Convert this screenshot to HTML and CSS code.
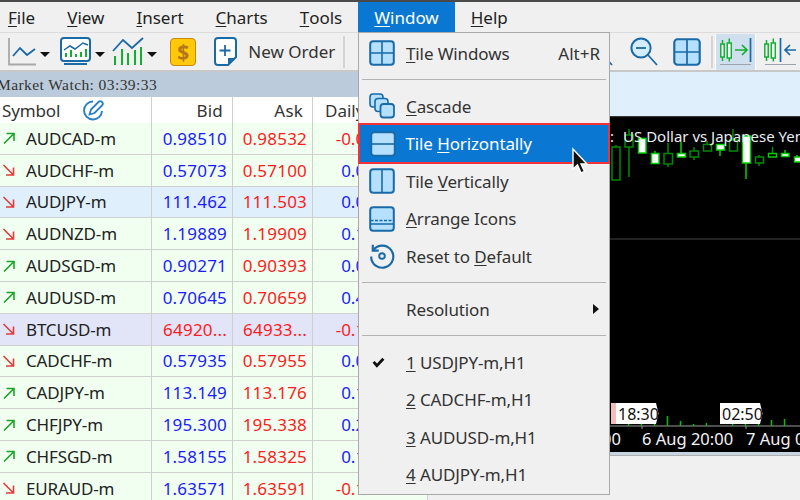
FILE: index.html
```html
<!DOCTYPE html>
<html lang="en">
<head>
<meta charset="utf-8">
<title>MetaTrader Window menu</title>
<link rel="stylesheet" href="styles.css">
</head>
<body>
<svg class="defs" width="0" height="0" aria-hidden="true">
  <symbol id="up" viewBox="0 0 14 14"><path d="M2 12.500 12 2.500M4.500 2.500H12V10" fill="none" stroke="#1aa52a" stroke-width="1.600"/></symbol>
  <symbol id="down" viewBox="0 0 14 14"><path d="M1.500 2 11.500 12M11.500 4.500V12H4" fill="none" stroke="#e23c3c" stroke-width="1.600"/></symbol>
  <symbol id="tile4" viewBox="0 0 26 26"><rect x="1.200" y="1.200" width="23.600" height="23.600" rx="3" fill="#b5e0ff" stroke="#1a6aa8" stroke-width="2"/><path d="M13 1.500V24.500M1.500 13H24.500" stroke="#1a6aa8" stroke-width="1.600"/></symbol>
  <symbol id="tileh" viewBox="0 0 26 26"><rect x="1.200" y="1.200" width="23.600" height="23.600" rx="3" fill="#b5e0ff" stroke="#1a6aa8" stroke-width="2"/><path d="M1.500 13H24.500" stroke="#1a6aa8" stroke-width="1.600"/></symbol>
  <symbol id="tilev" viewBox="0 0 26 26"><rect x="1.200" y="1.200" width="23.600" height="23.600" rx="3" fill="#b5e0ff" stroke="#1a6aa8" stroke-width="2"/><path d="M13 1.500V24.500" stroke="#1a6aa8" stroke-width="1.600"/></symbol>
  <symbol id="arrange" viewBox="0 0 26 26"><rect x="1.200" y="1.200" width="23.600" height="23.600" rx="3" fill="#b5e0ff" stroke="#1a6aa8" stroke-width="2"/><path d="M1.500 14.500H24.500" stroke="#1a6aa8" stroke-width="1.500" stroke-dasharray="3 1.500"/><path d="M1.500 18H24.500" stroke="#1a6aa8" stroke-width="1.500"/></symbol>
  <symbol id="cascade" viewBox="0 0 26 26"><rect x="1" y="1" width="13" height="13" rx="3" fill="#b5e0ff" stroke="#1a6aa8" stroke-width="1.600"/><rect x="6" y="5.500" width="13" height="13" rx="3" fill="#b5e0ff" stroke="#1a6aa8" stroke-width="1.600"/><rect x="11.500" y="11" width="13.500" height="13.500" rx="3" fill="#b5e0ff" stroke="#1a6aa8" stroke-width="1.800"/></symbol>
  <symbol id="reset" viewBox="0 0 24 24"><path d="M4 6.500A10.200 10.200 0 1 1 2 12.500" fill="none" stroke="#1a6aa8" stroke-width="2"/><path d="M3.500 1.500V7H9" fill="none" stroke="#1a6aa8" stroke-width="2"/><circle cx="12" cy="12" r="2.600" fill="none" stroke="#1a6aa8" stroke-width="1.800"/></symbol>
  <symbol id="candles" viewBox="0 0 12 24"><path d="M2.500 2V23M9.300 0.500V23.500" stroke="#12b030" stroke-width="1.500"/><rect x="0.800" y="6" width="3.400" height="13" fill="#fff" stroke="#12b030" stroke-width="1.500"/><rect x="7.300" y="5" width="4" height="15" fill="#fff" stroke="#12b030" stroke-width="1.500"/></symbol>
  <symbol id="zoom" viewBox="0 0 28 29"><circle cx="11" cy="11" r="9.600" fill="#d4ecff" stroke="#1a6aa8" stroke-width="2"/><path d="M18 18 27 28" stroke="#1a6aa8" stroke-width="1.800"/></symbol>
</svg>

<header class="menubar">
  <span class="menu-label"><u>F</u>ile</span>
  <span class="menu-label"><u>V</u>iew</span>
  <span class="menu-label"><u>I</u>nsert</span>
  <span class="menu-label"><u>C</u>harts</span>
  <span class="menu-label"><u>T</u>ools</span>
  <span class="menu-label is-open"><u>W</u>indow</span>
  <span class="menu-label"><u>H</u>elp</span>
</header>

<nav class="toolbar">
  <svg class="tool t-line" viewBox="0 0 29 29"><path d="M1 1V27.500H28" fill="none" stroke="#a8a8a8" stroke-width="1.800"/><path d="M5 19 12 11 19 18 27 12" fill="none" stroke="#1a6aa8" stroke-width="1.800"/></svg>
  <i class="caret"></i>
  <svg class="tool t-monitor" viewBox="0 0 32 30"><rect x="1" y="1" width="29" height="23" rx="3" fill="#fff" stroke="#1a6aa8" stroke-width="2"/><path d="M4 13 10 9 15 12 23 6 28 8" fill="none" stroke="#1a6aa8" stroke-width="1.500"/><path d="M6 20V16M11 20V13M16 20V17M21 20V15M26 20V12" stroke="#12b030" stroke-width="2"/><path d="M4 27H27" stroke="#1a6aa8" stroke-width="2"/></svg>
  <i class="caret"></i>
  <svg class="tool t-bars" viewBox="0 0 32 29"><path d="M1 14 11 3 20 11 31 1" fill="none" stroke="#1a6aa8" stroke-width="1.800"/><path d="M3 28V19M10 28V12M16 28V16M23 28V13M29 28V10" stroke="#12b030" stroke-width="2"/></svg>
  <i class="caret"></i>
  <span class="dollar">$</span>
  <svg class="tool t-order" viewBox="0 0 23 29"><path d="M4 1H19A3 3 0 0 1 22 4V20L14 28H4A3 3 0 0 1 1 25V4A3 3 0 0 1 4 1Z" fill="#fff" stroke="#1a6aa8" stroke-width="2"/><path d="M11 8V19M5.500 13.500H16.500" stroke="#1a6aa8" stroke-width="1.800"/><path d="M14 28V21H22Z" fill="#1a6aa8"/></svg>
  <span class="new-order">New Order</span>
  <i class="tool-sep"></i>
  <span class="toolbar-right">
    <svg class="tool t-zoom-in" viewBox="0 0 28 29"><use href="#zoom" width="28" height="29"/></svg>
    <svg class="tool t-zoom" viewBox="0 0 28 29"><use href="#zoom" width="28" height="29"/><path d="M6 11H16" stroke="#1a6aa8" stroke-width="1.800"/></svg>
    <svg class="tool t-tile"><use href="#tile4"/></svg>
    <i class="tool-sep sep-right"></i>
    <span class="pressed">
      <svg class="t-shift" viewBox="0 0 32 24"><use href="#candles" width="12" height="24"/><path d="M15 12H27M22 7 27 12 22 17" fill="none" stroke="#12b030" stroke-width="1.700"/><path d="M30.500 0V24" stroke="#1a6aa8" stroke-width="1.700"/></svg>
      <i class="press-line"></i>
    </span>
    <span class="plain-tool">
      <svg class="t-shift" viewBox="0 0 32 24"><use href="#candles" width="12" height="24"/><path d="M16.500 0V24" stroke="#1a6aa8" stroke-width="1.700"/><path d="M32 12H21M26 7 21 12 26 17" fill="none" stroke="#1a6aa8" stroke-width="1.700"/></svg>
      <i class="press-line"></i>
    </span>
  </span>
</nav>

<main class="workspace">
  <section class="watch">
    <div class="watch-title">Market Watch: 03:39:33</div>
    <div class="row head">
      <span class="c-sym">Symbol<svg class="edit" viewBox="0 0 22 22"><path d="M11 2.500A9 9 0 1 0 20 12" fill="none" stroke="#2a7fc4" stroke-width="1.900"/><path d="M7.500 15.500 9 10.500 16.500 3A2.300 2.300 0 0 1 20 6.500L12.500 14Z" fill="#fff" stroke="#2a7fc4" stroke-width="1.800"/></svg></span>
      <span class="c-num head-num">Bid</span><span class="c-num head-num">Ask</span><span class="c-day">Daily</span>
    </div>
    <div class="row"><span class="c-sym"><svg class="arrow"><use href="#up"/></svg>AUDCAD-m</span><span class="c-num bid">0.98510</span><span class="c-num ask">0.98532</span><span class="c-day ask">-0.04%</span></div>
    <div class="row"><span class="c-sym"><svg class="arrow"><use href="#down"/></svg>AUDCHF-m</span><span class="c-num bid">0.57073</span><span class="c-num ask">0.57100</span><span class="c-day bid">0.03%</span></div>
    <div class="row tint-blue"><span class="c-sym"><svg class="arrow"><use href="#down"/></svg>AUDJPY-m</span><span class="c-num bid">111.462</span><span class="c-num ask">111.503</span><span class="c-day bid">0.05%</span></div>
    <div class="row"><span class="c-sym"><svg class="arrow"><use href="#down"/></svg>AUDNZD-m</span><span class="c-num bid">1.19889</span><span class="c-num ask">1.19909</span><span class="c-day bid">0.12%</span></div>
    <div class="row"><span class="c-sym"><svg class="arrow"><use href="#up"/></svg>AUDSGD-m</span><span class="c-num bid">0.90271</span><span class="c-num ask">0.90393</span><span class="c-day bid">0.06%</span></div>
    <div class="row"><span class="c-sym"><svg class="arrow"><use href="#up"/></svg>AUDUSD-m</span><span class="c-num bid">0.70645</span><span class="c-num ask">0.70659</span><span class="c-day bid">0.41%</span></div>
    <div class="row tint-violet"><span class="c-sym"><svg class="arrow"><use href="#down"/></svg>BTCUSD-m</span><span class="c-num ask">64920...</span><span class="c-num ask">64933...</span><span class="c-day ask">-0.15%</span></div>
    <div class="row"><span class="c-sym"><svg class="arrow"><use href="#down"/></svg>CADCHF-m</span><span class="c-num bid">0.57935</span><span class="c-num ask">0.57955</span><span class="c-day bid">0.02%</span></div>
    <div class="row"><span class="c-sym"><svg class="arrow"><use href="#up"/></svg>CADJPY-m</span><span class="c-num bid">113.149</span><span class="c-num ask">113.176</span><span class="c-day bid">0.13%</span></div>
    <div class="row"><span class="c-sym"><svg class="arrow"><use href="#up"/></svg>CHFJPY-m</span><span class="c-num bid">195.300</span><span class="c-num ask">195.338</span><span class="c-day bid">0.21%</span></div>
    <div class="row"><span class="c-sym"><svg class="arrow"><use href="#up"/></svg>CHFSGD-m</span><span class="c-num bid">1.58155</span><span class="c-num ask">1.58325</span><span class="c-day bid">0.14%</span></div>
    <div class="row"><span class="c-sym"><svg class="arrow"><use href="#down"/></svg>EURAUD-m</span><span class="c-num bid">1.63571</span><span class="c-num ask">1.63591</span><span class="c-day ask">-0.11%</span></div>
  </section>

  <section class="chart-pane">
    <div class="chart-strip"></div>
    <svg class="chart" viewBox="428 116 372 336" preserveAspectRatio="none">
      <rect x="428" y="116" width="372" height="336" fill="#000"/>
      <path d="M428 116.500H800" stroke="#333" stroke-width="1.500"/>
      <path d="M428 239H800" stroke="#222" stroke-width="2"/>
      <g class="wick-dark">
        <path d="M616 145V147M629 129V177M668 143V167M694 147V160M707 141V144M733 129V140M759 155V166M772.500 147V153"/>
      </g>
      <g class="wick-lite">
        <path d="M655 151V153M681 142V153M720 150V156M746 163V179M785 150V153M797 155V157"/>
      </g>
      <g class="hollow">
        <rect x="612" y="147" width="8" height="33"/><rect x="625" y="135" width="8" height="12"/><rect x="664" y="153.500" width="8.500" height="10.500"/><rect x="690" y="151" width="8.500" height="6"/><rect x="703.500" y="144.500" width="8" height="6.500"/><rect x="729.500" y="140" width="8" height="11"/><rect x="755.500" y="157" width="8" height="6"/>
      </g>
      <g class="solid">
        <rect x="638.500" y="138.500" width="7.500" height="14.500"/><rect x="651.500" y="153.500" width="7.500" height="10"/><rect x="677.500" y="153.500" width="8" height="3.500"/><rect x="716.500" y="144.500" width="8" height="5.500"/><rect x="742.500" y="136" width="8" height="27"/><rect x="781.500" y="153.500" width="7.500" height="3"/><rect x="794.500" y="157" width="7" height="5"/>
      </g>
      <rect class="hollow-lite" x="768.500" y="153.500" width="8" height="3.500"/>
      <text class="chart-title" x="610" y="142">:<tspan dx="9">US Dollar vs Japanese Yen</tspan></text>
      <path d="M428 426H800" stroke="#9a9a9a" stroke-width="1"/>
      <path class="vol" d="M628.500 426V424M641.500 426V424M654.500 426V424M667.500 426V416M680.500 426V421M693.500 426V424M706.500 426V423M732.500 426V424M745.500 426V424M758.500 426V424M771.500 426V420M784.500 426V419"/>
      <path d="M642 426V429M746 426V429" stroke="#9a9a9a"/>
      <path d="M611 403H616V424H611Z" fill="#f4bcbc"/>
      <path class="tag" d="M616 403H656L658.500 413.500 656 424H616Z"/>
      <path class="tag" d="M720 403H760L762.500 413.500 760 424H720Z"/>
      <text class="tag-text" x="618" y="419.500">18:30</text>
      <text class="tag-text" x="722" y="419.500">02:50</text>
      <text class="axis-text" x="602" y="445">00</text>
      <text class="axis-text" x="642" y="445">6 Aug 20:00</text>
      <text class="axis-text" x="746" y="445">7 Aug 04:00</text>
    </svg>
    <div class="chart-foot"></div>
  </section>
</main>

<div class="dropdown">
  <div class="item"><svg class="ico"><use href="#tile4"/></svg><span class="label"><u>T</u>ile Windows</span><span class="hint">Alt+R</span></div>
  <hr class="sep">
  <div class="item"><svg class="ico"><use href="#cascade"/></svg><span class="label"><u>C</u>ascade</span></div>
  <div class="item is-active"><svg class="ico"><use href="#tileh"/></svg><span class="label">Tile <u>H</u>orizontally</span></div>
  <div class="item"><svg class="ico"><use href="#tilev"/></svg><span class="label">Tile <u>V</u>ertically</span></div>
  <div class="item"><svg class="ico"><use href="#arrange"/></svg><span class="label"><u>A</u>rrange Icons</span></div>
  <div class="item"><svg class="ico"><use href="#reset"/></svg><span class="label">Reset to <u>D</u>efault</span></div>
  <hr class="sep">
  <div class="item"><span class="ico"></span><span class="label">Resolution</span><i class="submenu"></i></div>
  <hr class="sep">
  <div class="item"><span class="ico"><svg class="check" viewBox="0 0 12 10"><path d="M1.500 4.500 4.500 8 10.500 1.500" fill="none" stroke="#111" stroke-width="2.600"/></svg></span><span class="label"><u>1</u> USDJPY-m,H1</span></div>
  <div class="item"><span class="ico"></span><span class="label"><u>2</u> CADCHF-m,H1</span></div>
  <div class="item"><span class="ico"></span><span class="label"><u>3</u> AUDUSD-m,H1</span></div>
  <div class="item"><span class="ico"></span><span class="label"><u>4</u> AUDJPY-m,H1</span></div>
</div>

<svg class="cursor" viewBox="0 0 18 28"><path d="M2 1V21L6.500 17 10 25 13.500 23.500 10 16H16Z" fill="#111" stroke="#fff" stroke-width="1.400"/></svg>
</body>
</html>
```

FILE: styles.css
```css
* { box-sizing: border-box; }
html, body { margin: 0; height: 100%; }
body {
  position: relative;
  width: 800px;
  height: 500px;
  overflow: hidden;
  background: #f0f0f0;
  color: #222;
  font-family: "Noto Sans", "DejaVu Sans", sans-serif;
  font-size: 17px;
  border-top: 2px solid #4a4a4a;
}
.defs { position: absolute; }
u { text-underline-offset: 2px; text-decoration-thickness: 1px; }

.menubar { display: flex; height: 30px; margin-left: -8px; }
.menu-label { display: flex; align-items: center; padding: 1px 16px 0; height: 30px; }
.is-open { background: #0a78d2; color: #fff; }

.toolbar {
  display: flex;
  align-items: center;
  height: 40px;
  padding-left: 8px;
  border-top: 1.500px solid #dcdcdc;
  border-bottom: 2px solid #c8c8c8;
}
.tool { flex: none; display: block; }
.t-line { width: 29px; height: 29px; }
.t-monitor { width: 32px; height: 30px; margin-left: 10px; }
.t-bars { width: 32px; height: 29px; margin-left: 7px; }
.caret {
  flex: none;
  margin: 5px 0 0 3px;
  border-left: 5.500px solid transparent;
  border-right: 5.500px solid transparent;
  border-top: 5.500px solid #111;
}
.dollar {
  display: flex;
  align-items: center;
  justify-content: center;
  width: 28px;
  height: 28px;
  margin-left: 13px;
  border: 1.500px solid #c8860e;
  border-radius: 4px;
  background: #ffc90a;
  color: #b5761a;
  font-size: 21px;
  font-weight: 700;
}
.t-order { width: 23px; height: 29px; margin-left: 18px; }
.new-order { margin-left: 11px; width: 101px; color: #333; }
.tool-sep { flex: none; width: 2px; height: 32px; background: #d4d4d4; }
.toolbar-right { display: flex; align-items: center; margin-left: 240px; }
.t-zoom-in { width: 28px; height: 29px; }
.t-zoom { width: 28px; height: 29px; margin-left: 17px; }
.t-tile { width: 28px; height: 28px; margin-left: 15px; }
.sep-right { margin-left: 10px; }
.pressed, .plain-tool {
  flex: none;
  display: flex;
  flex-direction: column;
  align-items: center;
  justify-content: center;
  width: 41px;
  height: 36px;
  margin-left: 2px;
  gap: 2px;
}
.pressed { background: #cfdfee; border-right: 1.500px solid #fff; border-left: 1.500px solid #fff; }
.plain-tool { margin-left: 4px; width: 40px; }
.t-shift { width: 32px; height: 24px; flex: none; }
.press-line { width: 31px; height: 1.500px; background: #9aa4ae; flex: none; }

.workspace { display: flex; height: 428px; }
.watch { flex: none; width: 428px; background: #fff; }
.watch-title {
  height: 25px;
  line-height: 25px;
  text-indent: -3px;
  background: #bccbdb;
  color: #333;
  font-family: "Liberation Serif", serif;
  font-size: 15.500px;
  letter-spacing: .42px;
}
.row {
  display: grid;
  grid-template-columns: 152px 81px 80px 115px;
  height: 31.800px;
  align-items: stretch;
  background: #f0fff0;
  border-bottom: 1.500px solid #d0d0d0;
}
.row > span { display: flex; align-items: center; border-right: 1.500px solid #cfcfcf; white-space: nowrap; }
.head { height: 26px; background: #fff; border-bottom: 0; color: #333; }
.tint-blue { background: #e0effc; }
.tint-violet { background: #e2e4f8; }
.c-sym { padding-left: 2px; letter-spacing: -.15px; }
.c-num { justify-content: flex-end; padding-right: 5px; letter-spacing: .2px; }
.head-num { padding-right: 9px; }
.c-day { justify-content: flex-end; padding-right: 38px; }
.head .c-day { justify-content: flex-start; padding: 0 0 0 12px; }
.bid { color: #1c1cff; }
.ask { color: #ff1c1c; }
.arrow { width: 14px; height: 14px; margin-right: 10px; flex: none; }
.edit { width: 22px; height: 22px; margin-left: 22px; flex: none; }

.chart-pane { flex: 1; display: flex; flex-direction: column; }
.chart-strip { height: 44px; flex: none; background: #e0effc; }
.chart { flex: none; display: block; width: 372px; height: 336px; }
.chart-foot { height: 4px; flex: none; background: #c6d4e2; border-bottom: 1px solid #b0b0b0; }
.hollow rect { fill: #000; stroke: #008a00; stroke-width: 1.500; }
.hollow-lite { fill: #000; stroke: #00d000; stroke-width: 1.500; }
.solid rect { fill: #fff; stroke: #00d000; stroke-width: 1.500; }
.wick-dark path { stroke: #008a00; stroke-width: 1.500; fill: none; }
.wick-lite path { stroke: #00d000; stroke-width: 1.500; fill: none; }
.vol { stroke: #00c000; stroke-width: 1.500; fill: none; }
.chart-title { fill: #e8eef6; font-size: 15px; }
.tag { fill: #fff; }
.tag-text { fill: #111; font-size: 16px; }
.axis-text { fill: #f0f4f8; font-size: 16.500px; }

.dropdown {
  position: absolute;
  left: 358px;
  top: 30px;
  width: 252px;
  height: 463px;
  padding-top: 1.500px;
  background: #f0f0f0;
  border: 1px solid #a8a8a8;
  color: #333;
}
.item { display: flex; align-items: center; height: 37.500px; }
.ico { flex: none; width: 26px; height: 26px; margin: 0 11px 0 10px; display: flex; align-items: center; }
.label { flex: 1; white-space: nowrap; letter-spacing: -.12px; }
.hint { padding-right: 9px; }
.sep { height: 1.500px; margin: 6.500px 3px 7.500px; border: 0; background: #b4b4b4; }
.is-active {
  height: 41px;
  margin: -1.750px -1px;
  padding-left: 1px;
  background: #0a78d2;
  border: 2.500px solid #f43038;
  color: #fff;
}
.is-active .ico { margin: 0 9.500px 0 9px; }
.submenu {
  margin-right: 10px;
  border-top: 5px solid transparent;
  border-bottom: 5px solid transparent;
  border-left: 6px solid #111;
}
.check { width: 13px; height: 11px; margin-left: 3px; }
.cursor {
  position: absolute;
  left: 571px;
  top: 145px;
  width: 18px;
  height: 30px;
}
```
